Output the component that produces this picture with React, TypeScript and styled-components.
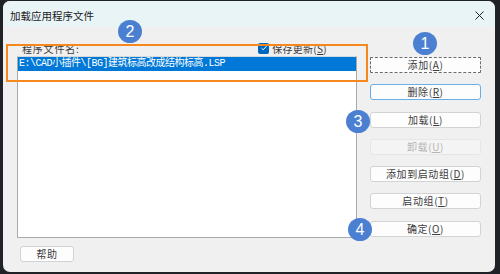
import React from "react";
import styled, { createGlobalStyle } from "styled-components";

const Global = createGlobalStyle`
  html, body { margin: 0; padding: 0; }
  body { background: #1f2327; width: 500px; height: 274px; overflow: hidden; }
  #root { width: 500px; height: 274px; }
`;

const CJK = `"Noto Sans CJK SC", "Noto Sans", sans-serif`;

const Page = styled.div`
  width: 500px;
  height: 274px;
  background: #1f2327;
  padding: 1px 0 0 3px;
  box-sizing: border-box;
`;

const Window = styled.div`
  position: relative;
  width: 492px;
  height: 271px;
  border-radius: 7px;
  overflow: hidden;
  background: #f0f0f0;
  display: flex;
  flex-direction: column;
  font-family: ${CJK};
  font-size: 10px;
`;

const TitleBar = styled.div`
  height: 26px;
  flex: none;
  background: #e9f4f7;
  display: flex;
  align-items: center;
  padding: 0 8px 0 7px;
  font-size: 10.5px;
  color: #1b1b1b;
`;

const Title = styled.span`
  flex: 1;
  padding-top: 2px;
`;

const Close = styled.svg`
  width: 9px;
  height: 9px;
  margin-right: 3px;
  margin-top: 2px;
`;

const Body = styled.div`
  flex: 1;
  display: flex;
  gap: 13px;
  padding: 13px 0 0 14px;
`;

const LeftCol = styled.div`
  width: 340px;
  display: flex;
  flex-direction: column;
`;

const LabelRow = styled.div`
  height: 16px;
  flex: none;
  display: flex;
  align-items: center;
  font-size: 10px;
  color: #3a3a3a;
`;

const FieldLabel = styled.span`
  padding-left: 5px;
  letter-spacing: 0.8px;
`;

const CheckWrap = styled.label`
  margin-left: auto;
  margin-right: 30px;
  display: flex;
  align-items: center;
  gap: 3px;
  letter-spacing: 0.3px;
`;

const CheckBox = styled.span`
  width: 11px;
  height: 11px;
  border-radius: 2px;
  background: #0067c0;
  display: flex;
  align-items: center;
  justify-content: center;
`;

const ListBox = styled.div`
  height: 182px;
  flex: none;
  background: #fff;
  border: 1px solid #a9a9a9;
  border-top-color: #d8d8d8;
  box-sizing: border-box;
  display: flex;
  flex-direction: column;
`;

const ListRow = styled.div<{ $selected?: boolean }>`
  height: 14px;
  line-height: 14px;
  padding-left: 1px;
  background: ${(p) => (p.$selected ? "#0078d7" : "transparent")};
  color: ${(p) => (p.$selected ? "#fff" : "#222")};
  font-family: "Liberation Mono", "Noto Sans CJK SC", monospace;
  font-size: 10px;
  letter-spacing: -0.5px;
  white-space: nowrap;
`;

const Footer = styled.div`
  display: flex;
  padding: 8px 0 0 3px;
`;

const RightCol = styled.div`
  width: 111px;
  padding-top: 17px;
  display: flex;
  flex-direction: column;
  gap: 11.3px;
`;

type Variant = "focus" | "hover" | "normal" | "disabled";

const Button = styled.button<{ $variant?: Variant; $width?: number }>`
  width: ${(p) => (p.$width ? `${p.$width}px` : "100%")};
  height: 16px;
  flex: none;
  padding: 0;
  box-sizing: border-box;
  font-family: ${CJK};
  font-size: 10px;
  line-height: 14px;
  letter-spacing: 0.6px;
  background: ${(p) => (p.$variant === "disabled" ? "#f4f4f4" : "#fdfdfd")};
  color: ${(p) => (p.$variant === "disabled" ? "#b4b4b4" : "#3c3c3c")};
  border: 1px
    ${(p) =>
      p.$variant === "focus"
        ? "dashed #6b6b6b"
        : p.$variant === "hover"
        ? "solid #6aaee6"
        : p.$variant === "disabled"
        ? "solid #e6e6e6"
        : "solid #d3d3d3"};
  border-radius: ${(p) => (p.$variant === "focus" ? "1px" : "3px")};
  cursor: default;
`;

const Key = styled.span`
  text-decoration: underline;
  text-underline-offset: 1px;
`;

const Highlight = styled.div`
  position: absolute;
  left: 3px;
  top: 43px;
  width: 362px;
  height: 38px;
  border: 2px solid #f5891f;
  box-sizing: border-box;
  pointer-events: none;
`;

const Badge = styled.div<{ $x: number; $y: number }>`
  position: absolute;
  left: ${(p) => p.$x - 12}px;
  top: ${(p) => p.$y - 11}px;
  width: 24px;
  height: 23px;
  border-radius: 50%;
  background: #4b7fd1;
  color: #fff;
  font-family: "Liberation Sans", Arial, sans-serif;
  font-size: 16px;
  display: flex;
  align-items: center;
  justify-content: center;
`;

const buttons: { label: string; key: string; variant: Variant }[] = [
  { label: "添加", key: "A", variant: "focus" },
  { label: "删除", key: "R", variant: "hover" },
  { label: "加载", key: "L", variant: "normal" },
  { label: "卸载", key: "U", variant: "disabled" },
  { label: "添加到启动组", key: "D", variant: "normal" },
  { label: "启动组", key: "T", variant: "normal" },
  { label: "确定", key: "O", variant: "normal" },
];

export default function App() {
  return (
    <>
      <Global />
      <Page>
        <Window>
          <TitleBar>
            <Title>加载应用程序文件</Title>
            <Close viewBox="0 0 9 9">
              <path d="M0.5 0.5 L8.5 8.5 M8.5 0.5 L0.5 8.5" stroke="#222" strokeWidth="1" fill="none" />
            </Close>
          </TitleBar>
          <Body>
            <LeftCol>
              <LabelRow>
                <FieldLabel>程序文件名:</FieldLabel>
                <CheckWrap>
                  <CheckBox>
                    <svg width="8" height="8" viewBox="0 0 8 8">
                      <path d="M1.5 4.2 L3.2 5.8 L6.5 2.2" stroke="#fff" strokeWidth="1" fill="none" />
                    </svg>
                  </CheckBox>
                  <span>
                    保存更新(<Key>S</Key>)
                  </span>
                </CheckWrap>
              </LabelRow>
              <ListBox>
                <ListRow $selected>E:\CAD小插件\[BG]建筑标高改成结构标高.LSP</ListRow>
              </ListBox>
              <Footer>
                <Button $variant="normal" $width={54}>帮助</Button>
              </Footer>
            </LeftCol>
            <RightCol>
              {buttons.map((b) => (
                <Button key={b.key} $variant={b.variant}>
                  {b.label}(<Key>{b.key}</Key>)
                </Button>
              ))}
            </RightCol>
          </Body>
          <Highlight />
          <Badge $x={422} $y={42}>1</Badge>
          <Badge $x={127} $y={30}>2</Badge>
          <Badge $x={355} $y={120}>3</Badge>
          <Badge $x={357} $y={228}>4</Badge>
        </Window>
      </Page>
    </>
  );
}
